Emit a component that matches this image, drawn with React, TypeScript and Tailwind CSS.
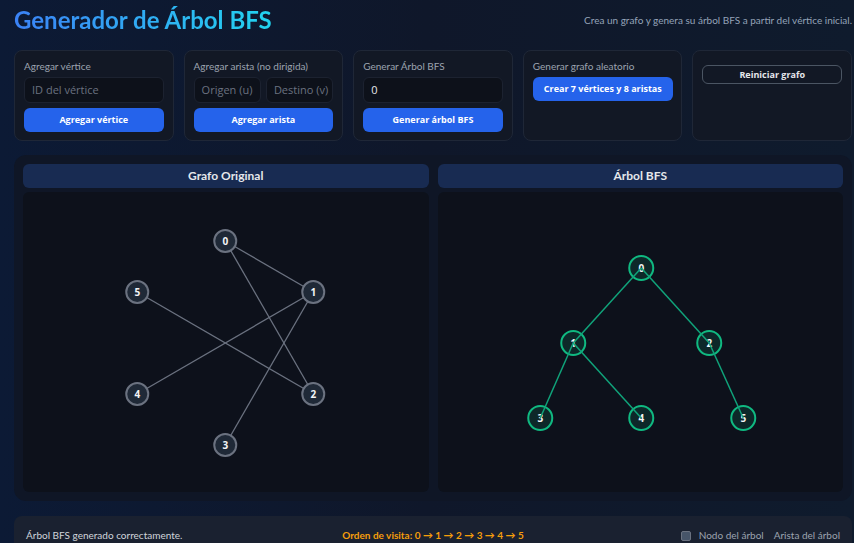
import React from "react";

type Node = { id: number; x: number; y: number };

const graphNodes: Node[] = [
  { id: 0, x: 202, y: 49 },
  { id: 1, x: 290, y: 100 },
  { id: 2, x: 290, y: 202 },
  { id: 3, x: 202, y: 253 },
  { id: 4, x: 114, y: 202 },
  { id: 5, x: 114, y: 100 },
];
const graphEdges: [number, number][] = [
  [0, 1],
  [0, 2],
  [1, 4],
  [1, 3],
  [5, 2],
];

const treeNodes: Node[] = [
  { id: 0, x: 203, y: 76 },
  { id: 1, x: 135, y: 151 },
  { id: 2, x: 271, y: 151 },
  { id: 3, x: 102, y: 226 },
  { id: 4, x: 203, y: 226 },
  { id: 5, x: 305, y: 226 },
];
const treeEdges: [number, number][] = [
  [0, 1],
  [0, 2],
  [1, 3],
  [1, 4],
  [2, 5],
];

const font = { fontFamily: "Lato, 'Noto Sans', sans-serif" };
const btnFont = { fontFamily: "'Open Sans', 'Liberation Sans', sans-serif" };

function GraphSvg({ nodes, edges, tree }: { nodes: Node[]; edges: [number, number][]; tree?: boolean }) {
  const find = (id: number) => nodes.find((n) => n.id === id)!;
  const r = tree ? 12 : 11;
  return (
    <svg width="100%" height="300" viewBox="0 0 405 300">
      {!tree &&
        edges.map(([a, b]) => (
          <line key={`${a}-${b}`} x1={find(a).x} y1={find(a).y} x2={find(b).x} y2={find(b).y} stroke="#6b7280" strokeWidth="1.3" />
        ))}
      {nodes.map((n) => (
        <g key={n.id}>
          <circle
            cx={n.x}
            cy={n.y}
            r={r}
            fill={tree ? "rgba(16,185,129,0.14)" : "#1f2937"}
            stroke={tree ? "#10b981" : "#6b7280"}
            strokeWidth="2"
          />
          <text
            x={n.x}
            y={n.y + 3.5}
            textAnchor="middle"
            fontSize="10"
            fontWeight="700"
            fill="#f3f4f6"
            style={btnFont}
          >
            {n.id}
          </text>
        </g>
      ))}
      {tree &&
        edges.map(([a, b]) => (
          <line key={`${a}-${b}`} x1={find(a).x} y1={find(a).y} x2={find(b).x} y2={find(b).y} stroke="#10a37a" strokeWidth="1.5" />
        ))}
    </svg>
  );
}

function Card({ children }: { children: React.ReactNode }) {
  return (
    <div className="h-[91px] rounded-lg border border-[#1f2737] bg-[#121825] px-[9px] pt-[8px]">{children}</div>
  );
}

function Label({ text }: { text: string }) {
  return <div className="mb-[4px] text-[10px] leading-[14px] text-[#9ca3af]">{text}</div>;
}

function Input({ placeholder, value }: { placeholder?: string; value?: string }) {
  return (
    <div
      className={`flex h-[26px] items-center overflow-hidden whitespace-nowrap rounded-md border border-[#1c2230] bg-[#0d111a] px-[7px] text-[11px] ${
        value ? "text-[#e5e7eb]" : "text-[#6b7280]"
      }`}
      style={btnFont}
    >
      {value ?? placeholder}
    </div>
  );
}

function Button({ text }: { text: string }) {
  return (
    <div
      className="flex h-[24px] items-center justify-center rounded-md bg-[#2563eb] text-[9px] font-bold text-white"
      style={btnFont}
    >
      {text}
    </div>
  );
}

export default function App() {
  return (
    <div
      className="h-[543px] w-full overflow-hidden bg-[linear-gradient(90deg,#0c1a35_0%,#0f172a_50%,#0f1b2d_100%)] pl-[14px] pr-[2px]"
      style={font}
    >
      {/* header */}
      <div className="flex h-[50px] items-start justify-between pt-[4px]">
        <h1 className="bg-gradient-to-r from-[#3b82f6] to-[#22d3ee] bg-clip-text text-[24px] font-bold leading-[32px] text-transparent">
          Generador de Árbol BFS
        </h1>
        <p className="mt-[9px] text-[10px] text-[#94a3b8]">
          Crea un grafo y genera su árbol BFS a partir del vértice inicial.
        </p>
      </div>

      {/* controls */}
      <div className="grid grid-cols-5 gap-[10px]">
        <Card>
          <Label text="Agregar vértice" />
          <Input placeholder="ID del vértice" />
          <div className="mt-[5px]">
            <Button text="Agregar vértice" />
          </div>
        </Card>
        <Card>
          <Label text="Agregar arista (no dirigida)" />
          <div className="flex gap-[5px]">
            <div className="min-w-0 flex-1">
              <Input placeholder="Origen (u)" />
            </div>
            <div className="min-w-0 flex-1">
              <Input placeholder="Destino (v)" />
            </div>
          </div>
          <div className="mt-[5px]">
            <Button text="Agregar arista" />
          </div>
        </Card>
        <Card>
          <Label text="Generar Árbol BFS" />
          <Input value="0" />
          <div className="mt-[5px]">
            <Button text="Generar árbol BFS" />
          </div>
        </Card>
        <Card>
          <Label text="Generar grafo aleatorio" />
          <div className="w-[140px]">
            <Button text="Crear 7 vértices y 8 aristas" />
          </div>
        </Card>
        <Card>
          <div
            className="mt-[6px] flex h-[19px] items-center justify-center rounded-md border border-[#4b5563] text-[9px] font-bold text-[#e5e7eb]"
            style={btnFont}
          >
            Reiniciar grafo
          </div>
        </Card>
      </div>

      {/* graphs */}
      <div className="mt-[14px] grid grid-cols-2 gap-[9px] rounded-xl bg-[#0f1626] p-[9px]">
        {[
          { title: "Grafo Original", nodes: graphNodes, edges: graphEdges, tree: false },
          { title: "Árbol BFS", nodes: treeNodes, edges: treeEdges, tree: true },
        ].map((p) => (
          <div key={p.title}>
            <div className="flex h-[24px] items-center justify-center rounded-md bg-[#182b52] text-[12px] font-bold text-[#e5e7eb]">
              {p.title}
            </div>
            <div className="mt-[4px] rounded-md bg-[#0d111b]">
              <GraphSvg nodes={p.nodes} edges={p.edges} tree={p.tree} />
            </div>
          </div>
        ))}
      </div>

      {/* status */}
      <div className="mt-[15px] grid h-[40px] grid-cols-3 items-start rounded-t-lg bg-[#1a2130] px-[12px] pt-[12px] text-[10px]">
        <span className="text-[#d1d5db]">Árbol BFS generado correctamente.</span>
        <span className="text-center font-bold text-[#f59e0b]">Orden de visita: 0 → 1 → 2 → 3 → 4 → 5</span>
        <div className="flex items-center justify-end gap-[8px] text-[#9ca3af]">
          <span className="h-[10px] w-[10px] rounded-[2px] border border-[#6b7280] bg-[#475569]" />
          <span>Nodo del árbol</span>
          <span className="ml-[2px]">Arista del árbol</span>
        </div>
      </div>
    </div>
  );
}
